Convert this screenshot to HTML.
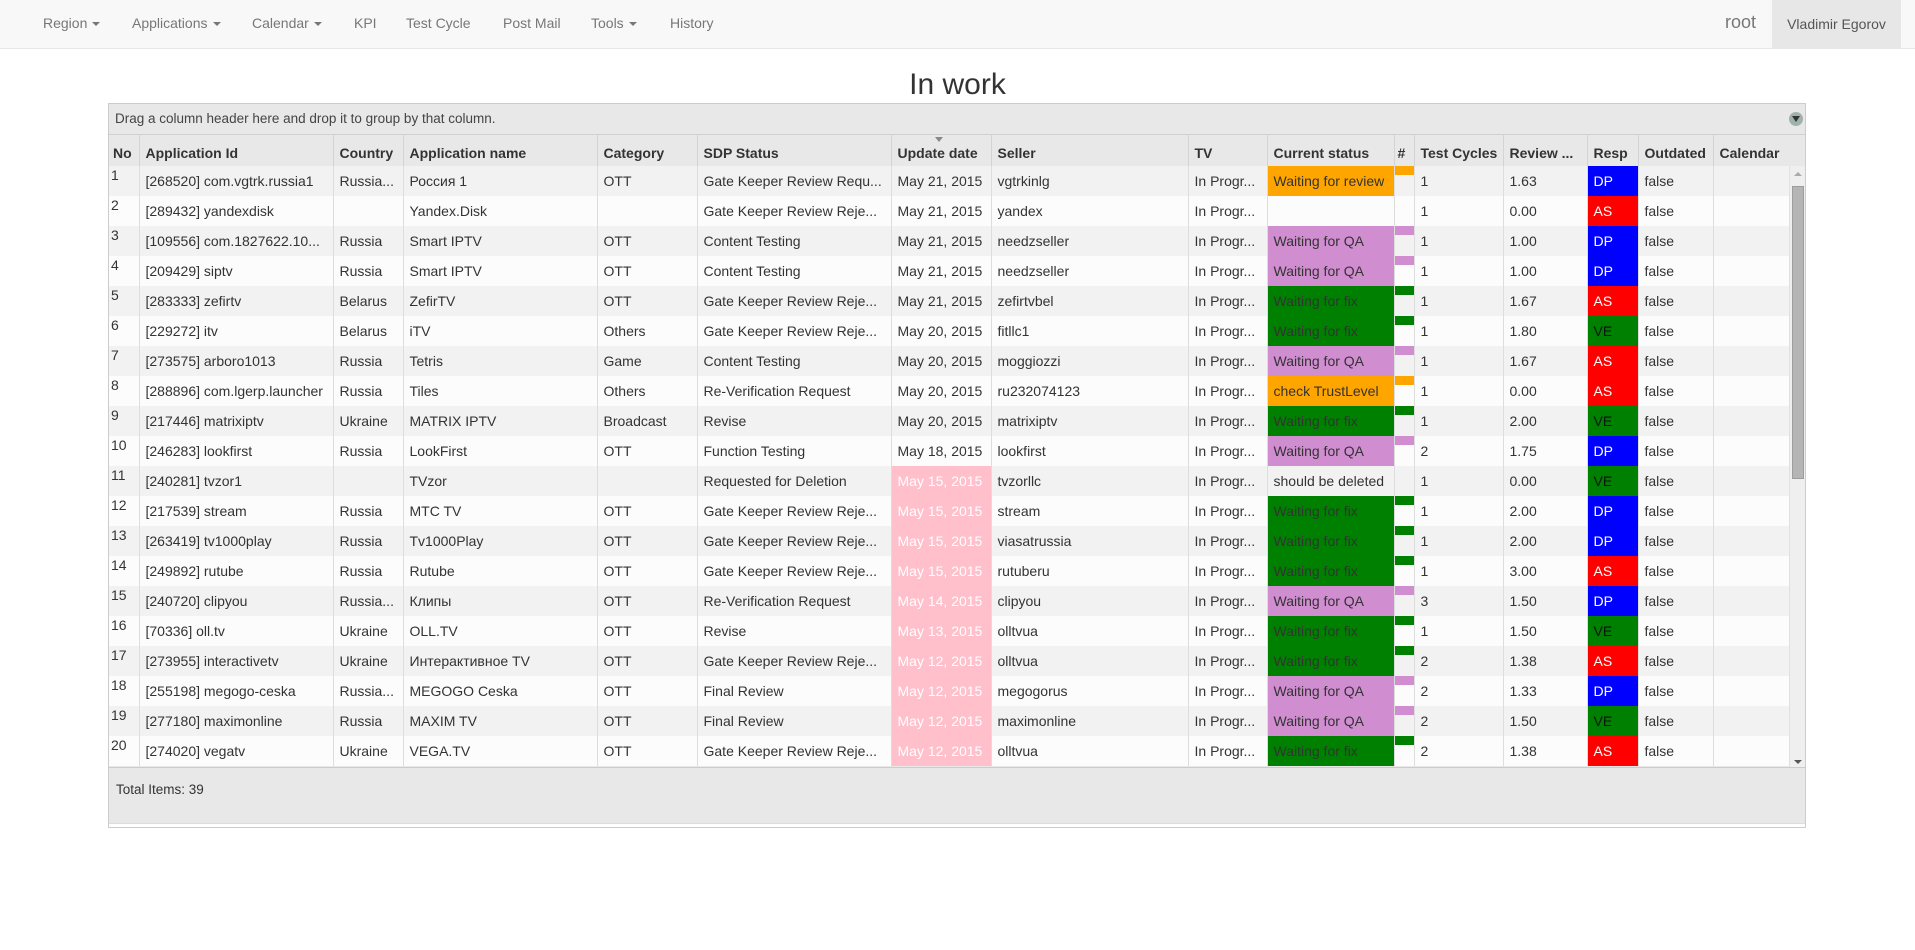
<!DOCTYPE html>
<html><head><meta charset="utf-8"><style>
*{box-sizing:border-box;margin:0;padding:0}
body{width:1915px;height:950px;background:#fff;font-family:"Liberation Sans",Arial,sans-serif;font-size:14px;color:#333;position:relative;overflow:hidden}
.nav{position:absolute;left:0;top:0;width:1915px;height:49px;background:#f8f8f8;border-bottom:1px solid #e7e7e7}
.nav span{position:absolute;top:15px;color:#777;font-size:14px;white-space:nowrap}
.caret{display:inline-block;width:0;height:0;border-left:4px solid transparent;border-right:4px solid transparent;border-top:4px solid #777;vertical-align:middle;margin-left:5px}
.user{position:absolute;left:1772px;top:0;width:129px;height:48px;background:#e7e7e7;color:#555;font-size:14px;line-height:48px;text-align:center}
h1{position:absolute;left:0;width:1915px;top:66px;text-align:center;font-weight:normal;font-size:30px;line-height:38px;color:#333}
.grid{position:absolute;left:108px;top:103px;width:1698px;height:725px;border:1px solid #ccc;background:#e8e8e8}
.grp{position:absolute;left:0;top:0;width:1696px;height:31px;color:#444;padding:7px 6px;font-size:13.5px;border-bottom:1px solid #d0d0d0}
.gi{position:absolute;left:1680px;top:8px;width:14px;height:14px;border-radius:7px;background:#9fb3ac}
.gi:after{content:"";position:absolute;left:3px;top:4px;border-left:4px solid transparent;border-right:4px solid transparent;border-top:6px solid #333}
table{border-collapse:collapse;table-layout:fixed;position:absolute;left:0}
.hd{top:31px;background:#e8e8e8}
.hd td{height:31px;font-weight:bold;padding:4px 6px 0;border-left:1px solid #d4d4d4;white-space:nowrap;overflow:hidden}
.bd{top:62px}
.bd td{height:30px;padding:0 6px;border-left:1px solid #ddd;white-space:nowrap;overflow:hidden;text-overflow:ellipsis}
.bd tr:nth-child(odd) td{background:#f2f2f2}
.bd tr:nth-child(even) td{background:#fcfcfc}
td.no{vertical-align:top;padding:1px 2px 0 2px!important}
.bd td.o{background:#ffa500!important}
.bd td.p{background:#d08dd0!important}
.bd td.g{background:#008000!important}
.bd td.pk{background:#ffc0cb!important;color:#fff}
.bd td.bl{background:#0000ff!important;color:#fff}
.bd td.rd{background:#ff0000!important;color:#fff}
.bd td.gr{background:#008000!important;color:#111}
td.h{padding:0!important;vertical-align:top}
td.h i{display:block;height:9px}
.sb{position:absolute;left:1680px;top:62px;width:16px;height:602px;background:#efefef;border-left:1px solid #e0e0e0}
.th{position:absolute;left:2px;top:20px;width:12px;height:293px;background:#b5b5b5;border:1px solid #9d9d9d}
.foot{position:absolute;left:0;top:663px;width:1696px;height:56px;border-top:1px solid #ccc;padding:14px 7px;color:#333;font-size:13.5px}
.fl{position:absolute;left:0;top:719px;width:1696px;height:4px;background:#fff;border-top:1px solid #ddd}
</style></head><body>
<div class="nav">
<span style="left:43px">Region<i class="caret"></i></span>
<span style="left:132px">Applications<i class="caret"></i></span>
<span style="left:252px">Calendar<i class="caret"></i></span>
<span style="left:354px">KPI</span>
<span style="left:406px">Test Cycle</span>
<span style="left:503px">Post Mail</span>
<span style="left:591px">Tools<i class="caret"></i></span>
<span style="left:670px">History</span>
<span style="left:1725px;top:12px;font-size:18px">root</span>
<div class="user">Vladimir Egorov</div>
</div>
<h1>In work</h1>
<div class="grid">
<div class="grp">Drag a column header here and drop it to group by that column.<div class="gi"></div></div>
<table class="hd" style="width:1696px">
<colgroup><col style="width:30px"><col style="width:194px"><col style="width:70px"><col style="width:194px"><col style="width:100px"><col style="width:194px"><col style="width:100px"><col style="width:197px"><col style="width:79px"><col style="width:127px"><col style="width:20px"><col style="width:89px"><col style="width:84px"><col style="width:51px"><col style="width:75px"><col style="width:92px"></colgroup>
<tr><td style="padding-left:4px;border-left:0">No</td><td>Application Id</td><td>Country</td><td>Application name</td><td>Category</td><td>SDP Status</td><td style="position:relative">Update date<i style="position:absolute;left:43px;top:2px;border-left:4px solid transparent;border-right:4px solid transparent;border-top:5px solid #888"></i></td><td>Seller</td><td>TV</td><td>Current status</td><td style="padding:4px 3px 0">#</td><td>Test Cycles</td><td>Review ...</td><td>Resp</td><td>Outdated</td><td>Calendar</td></tr>
</table>
<table class="bd" style="width:1680px">
<colgroup><col style="width:30px"><col style="width:194px"><col style="width:70px"><col style="width:194px"><col style="width:100px"><col style="width:194px"><col style="width:100px"><col style="width:197px"><col style="width:79px"><col style="width:127px"><col style="width:20px"><col style="width:89px"><col style="width:84px"><col style="width:51px"><col style="width:75px"><col style="width:76px"></colgroup>
<tr><td class="no" style="border-left:0">1</td><td>[268520] com.vgtrk.russia1</td><td>Russia...</td><td>Россия 1</td><td>OTT</td><td>Gate Keeper Review Requ...</td><td>May 21, 2015</td><td>vgtrkinlg</td><td>In Progr...</td><td class="o">Waiting for review</td><td class="h"><i style="background:#ffa500"></i></td><td>1</td><td>1.63</td><td class="bl">DP</td><td>false</td><td></td></tr>
<tr><td class="no" style="border-left:0">2</td><td>[289432] yandexdisk</td><td></td><td>Yandex.Disk</td><td></td><td>Gate Keeper Review Reje...</td><td>May 21, 2015</td><td>yandex</td><td>In Progr...</td><td></td><td class="h"></td><td>1</td><td>0.00</td><td class="rd">AS</td><td>false</td><td></td></tr>
<tr><td class="no" style="border-left:0">3</td><td>[109556] com.1827622.10...</td><td>Russia</td><td>Smart IPTV</td><td>OTT</td><td>Content Testing</td><td>May 21, 2015</td><td>needzseller</td><td>In Progr...</td><td class="p">Waiting for QA</td><td class="h"><i style="background:#d08dd0"></i></td><td>1</td><td>1.00</td><td class="bl">DP</td><td>false</td><td></td></tr>
<tr><td class="no" style="border-left:0">4</td><td>[209429] siptv</td><td>Russia</td><td>Smart IPTV</td><td>OTT</td><td>Content Testing</td><td>May 21, 2015</td><td>needzseller</td><td>In Progr...</td><td class="p">Waiting for QA</td><td class="h"><i style="background:#d08dd0"></i></td><td>1</td><td>1.00</td><td class="bl">DP</td><td>false</td><td></td></tr>
<tr><td class="no" style="border-left:0">5</td><td>[283333] zefirtv</td><td>Belarus</td><td>ZefirTV</td><td>OTT</td><td>Gate Keeper Review Reje...</td><td>May 21, 2015</td><td>zefirtvbel</td><td>In Progr...</td><td class="g">Waiting for fix</td><td class="h"><i style="background:#008000"></i></td><td>1</td><td>1.67</td><td class="rd">AS</td><td>false</td><td></td></tr>
<tr><td class="no" style="border-left:0">6</td><td>[229272] itv</td><td>Belarus</td><td>iTV</td><td>Others</td><td>Gate Keeper Review Reje...</td><td>May 20, 2015</td><td>fitllc1</td><td>In Progr...</td><td class="g">Waiting for fix</td><td class="h"><i style="background:#008000"></i></td><td>1</td><td>1.80</td><td class="gr">VE</td><td>false</td><td></td></tr>
<tr><td class="no" style="border-left:0">7</td><td>[273575] arboro1013</td><td>Russia</td><td>Tetris</td><td>Game</td><td>Content Testing</td><td>May 20, 2015</td><td>moggiozzi</td><td>In Progr...</td><td class="p">Waiting for QA</td><td class="h"><i style="background:#d08dd0"></i></td><td>1</td><td>1.67</td><td class="rd">AS</td><td>false</td><td></td></tr>
<tr><td class="no" style="border-left:0">8</td><td>[288896] com.lgerp.launcher</td><td>Russia</td><td>Tiles</td><td>Others</td><td>Re-Verification Request</td><td>May 20, 2015</td><td>ru232074123</td><td>In Progr...</td><td class="o">check TrustLevel</td><td class="h"><i style="background:#ffa500"></i></td><td>1</td><td>0.00</td><td class="rd">AS</td><td>false</td><td></td></tr>
<tr><td class="no" style="border-left:0">9</td><td>[217446] matrixiptv</td><td>Ukraine</td><td>MATRIX IPTV</td><td>Broadcast</td><td>Revise</td><td>May 20, 2015</td><td>matrixiptv</td><td>In Progr...</td><td class="g">Waiting for fix</td><td class="h"><i style="background:#008000"></i></td><td>1</td><td>2.00</td><td class="gr">VE</td><td>false</td><td></td></tr>
<tr><td class="no" style="border-left:0">10</td><td>[246283] lookfirst</td><td>Russia</td><td>LookFirst</td><td>OTT</td><td>Function Testing</td><td>May 18, 2015</td><td>lookfirst</td><td>In Progr...</td><td class="p">Waiting for QA</td><td class="h"><i style="background:#d08dd0"></i></td><td>2</td><td>1.75</td><td class="bl">DP</td><td>false</td><td></td></tr>
<tr><td class="no" style="border-left:0">11</td><td>[240281] tvzor1</td><td></td><td>TVzor</td><td></td><td>Requested for Deletion</td><td class="pk">May 15, 2015</td><td>tvzorllc</td><td>In Progr...</td><td>should be deleted</td><td class="h"></td><td>1</td><td>0.00</td><td class="gr">VE</td><td>false</td><td></td></tr>
<tr><td class="no" style="border-left:0">12</td><td>[217539] stream</td><td>Russia</td><td>MTC TV</td><td>OTT</td><td>Gate Keeper Review Reje...</td><td class="pk">May 15, 2015</td><td>stream</td><td>In Progr...</td><td class="g">Waiting for fix</td><td class="h"><i style="background:#008000"></i></td><td>1</td><td>2.00</td><td class="bl">DP</td><td>false</td><td></td></tr>
<tr><td class="no" style="border-left:0">13</td><td>[263419] tv1000play</td><td>Russia</td><td>Tv1000Play</td><td>OTT</td><td>Gate Keeper Review Reje...</td><td class="pk">May 15, 2015</td><td>viasatrussia</td><td>In Progr...</td><td class="g">Waiting for fix</td><td class="h"><i style="background:#008000"></i></td><td>1</td><td>2.00</td><td class="bl">DP</td><td>false</td><td></td></tr>
<tr><td class="no" style="border-left:0">14</td><td>[249892] rutube</td><td>Russia</td><td>Rutube</td><td>OTT</td><td>Gate Keeper Review Reje...</td><td class="pk">May 15, 2015</td><td>rutuberu</td><td>In Progr...</td><td class="g">Waiting for fix</td><td class="h"><i style="background:#008000"></i></td><td>1</td><td>3.00</td><td class="rd">AS</td><td>false</td><td></td></tr>
<tr><td class="no" style="border-left:0">15</td><td>[240720] clipyou</td><td>Russia...</td><td>Клипы</td><td>OTT</td><td>Re-Verification Request</td><td class="pk">May 14, 2015</td><td>clipyou</td><td>In Progr...</td><td class="p">Waiting for QA</td><td class="h"><i style="background:#d08dd0"></i></td><td>3</td><td>1.50</td><td class="bl">DP</td><td>false</td><td></td></tr>
<tr><td class="no" style="border-left:0">16</td><td>[70336] oll.tv</td><td>Ukraine</td><td>OLL.TV</td><td>OTT</td><td>Revise</td><td class="pk">May 13, 2015</td><td>olltvua</td><td>In Progr...</td><td class="g">Waiting for fix</td><td class="h"><i style="background:#008000"></i></td><td>1</td><td>1.50</td><td class="gr">VE</td><td>false</td><td></td></tr>
<tr><td class="no" style="border-left:0">17</td><td>[273955] interactivetv</td><td>Ukraine</td><td>Интерактивное TV</td><td>OTT</td><td>Gate Keeper Review Reje...</td><td class="pk">May 12, 2015</td><td>olltvua</td><td>In Progr...</td><td class="g">Waiting for fix</td><td class="h"><i style="background:#008000"></i></td><td>2</td><td>1.38</td><td class="rd">AS</td><td>false</td><td></td></tr>
<tr><td class="no" style="border-left:0">18</td><td>[255198] megogo-ceska</td><td>Russia...</td><td>MEGOGO Ceska</td><td>OTT</td><td>Final Review</td><td class="pk">May 12, 2015</td><td>megogorus</td><td>In Progr...</td><td class="p">Waiting for QA</td><td class="h"><i style="background:#d08dd0"></i></td><td>2</td><td>1.33</td><td class="bl">DP</td><td>false</td><td></td></tr>
<tr><td class="no" style="border-left:0">19</td><td>[277180] maximonline</td><td>Russia</td><td>MAXIM TV</td><td>OTT</td><td>Final Review</td><td class="pk">May 12, 2015</td><td>maximonline</td><td>In Progr...</td><td class="p">Waiting for QA</td><td class="h"><i style="background:#d08dd0"></i></td><td>2</td><td>1.50</td><td class="gr">VE</td><td>false</td><td></td></tr>
<tr><td class="no" style="border-left:0">20</td><td>[274020] vegatv</td><td>Ukraine</td><td>VEGA.TV</td><td>OTT</td><td>Gate Keeper Review Reje...</td><td class="pk">May 12, 2015</td><td>olltvua</td><td>In Progr...</td><td class="g">Waiting for fix</td><td class="h"><i style="background:#008000"></i></td><td>2</td><td>1.38</td><td class="rd">AS</td><td>false</td><td></td></tr>
</table>
<div class="sb"><div style="position:absolute;left:4px;top:6px;border-left:4px solid transparent;border-right:4px solid transparent;border-bottom:4px solid #aaa"></div><div class="th"></div><div style="position:absolute;left:4px;bottom:4px;border-left:4px solid transparent;border-right:4px solid transparent;border-top:4px solid #555"></div></div>
<div class="foot">Total Items: 39</div>
<div class="fl"></div>
</div>
</body></html>
